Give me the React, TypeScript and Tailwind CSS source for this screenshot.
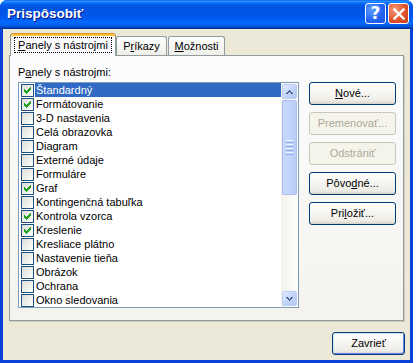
import React from "react";

const items: [string, boolean][] = [
  ["Štandardný", true],
  ["Formátovanie", true],
  ["3-D nastavenia", false],
  ["Celá obrazovka", false],
  ["Diagram", false],
  ["Externé údaje", false],
  ["Formuláre", false],
  ["Graf", true],
  ["Kontingenčná tabuľka", false],
  ["Kontrola vzorca", true],
  ["Kreslenie", true],
  ["Kresliace plátno", false],
  ["Nastavenie tieňa", false],
  ["Obrázok", false],
  ["Ochrana", false],
  ["Okno sledovania", false],
];

const CHECK = ["......#", ".....##", "#...###", "##.###.", "#####..", ".###...", "..#...."];
const UP = ["...#...", "..###..", ".##.##.", "##...##"];
const DOWN = ["##...##", ".##.##.", "..###..", "...#..."];

function Pixels({ rows, color }: { rows: string[]; color: string }) {
  const rects: React.ReactNode[] = [];
  rows.forEach((r, y) =>
    r.split("").forEach((c, x) => {
      if (c === "#") rects.push(<rect key={`${x}-${y}`} x={x} y={y} width={1} height={1} fill={color} />);
    })
  );
  return (
    <svg width={rows[0].length} height={rows.length} shapeRendering="crispEdges">
      {rects}
    </svg>
  );
}

function Check({ checked }: { checked: boolean }) {
  return (
    <div className="w-[13px] h-[13px] shrink-0 border border-[#1c5180] bg-[linear-gradient(135deg,#dcdcd7,#ffffff)] flex items-center justify-center">
      {checked && <Pixels rows={CHECK} color="#21a121" />}
    </div>
  );
}

function Btn({ children, disabled, className = "" }: { children: React.ReactNode; disabled?: boolean; className?: string }) {
  return (
    <div
      className={
        "h-[23px] rounded-[3px] border flex items-center justify-center " +
        (disabled
          ? "border-[#c9c7ba] bg-[#f5f4ea] text-[#aca899] "
          : "border-[#003c74] bg-[linear-gradient(180deg,#ffffff,#f3f2ee_60%,#ecebe6_86%,#d6d0c5)] text-black ") +
        className
      }
    >
      {children}
    </div>
  );
}

function ScrollBtn({ rows }: { rows: string[] }) {
  return (
    <div className="h-[17px] w-[17px] p-[1px] shrink-0">
      <div className="h-full w-full rounded-[2px] border border-[#bccdf4] bg-[linear-gradient(135deg,#e3ebfe,#c4d4fb_50%,#b4c8f6)] flex items-center justify-center">
        <Pixels rows={rows} color="#4d6185" />
      </div>
    </div>
  );
}

export default function App() {
  return (
    <div className="w-[416px] h-[363px] bg-white font-['Liberation_Sans',Arial,sans-serif] text-[11px] leading-[13px] text-black">
      <div className="w-[413px] h-[363px] rounded-t-[7px] overflow-hidden flex flex-col bg-[#0842d8]">
        {/* Title bar */}
        <div className="h-[29px] shrink-0 flex items-start pl-[7px] pr-[4px] bg-[linear-gradient(180deg,#0058ee_0%,#3593ff_4%,#288eff_6%,#127dff_8%,#036ffc_10%,#0262ee_14%,#0057e5_20%,#0054e3_24%,#0055eb_56%,#005bf5_66%,#026afe_76%,#0062ef_86%,#0052d6_92%,#0040ab_96%,#003092_100%)]">
          <span className="flex-1 mt-[6px] text-white font-bold text-[13.5px] leading-[16px] [text-shadow:1px_1px_0_#0a1883]">
            Prispôsobiť
          </span>
          <div className="flex gap-[2px] mt-[3px]">
            <div className="w-[21px] h-[21px] rounded-[3px] border border-white bg-[radial-gradient(circle_at_30%_30%,#5a9bff,#2263f0_60%,#1b55d8)] flex items-center justify-center">
              <span className="text-white font-bold text-[17px] leading-[17px] font-['DejaVu_Sans',sans-serif]">?</span>
            </div>
            <div className="w-[21px] h-[21px] rounded-[3px] border border-white bg-[radial-gradient(circle_at_30%_30%,#f39a7c,#e0532a_55%,#c8401a)] flex items-center justify-center">
              <svg width="12" height="12" viewBox="0 0 12 12">
                <path d="M1.5 1.5 L10.5 10.5 M10.5 1.5 L1.5 10.5" stroke="white" strokeWidth="2.4" strokeLinecap="square" />
              </svg>
            </div>
          </div>
        </div>

        {/* Body */}
        <div className="flex-1 mx-[3px] mb-[3px] bg-[#ece9d8] flex flex-col pt-[4px]">
          <div className="ml-[6px] w-[395px] flex flex-col">
            {/* Tabs */}
            <div className="h-[22px] flex items-end pl-[1px]">
              <div className="relative z-10 -mb-px h-[23px] w-[106px] rounded-t-[3px] border-x border-t border-[#919b9c] border-t-[#e68b2c] shadow-[inset_0_2px_0_#ffc73c] bg-[#fcfcfe] flex items-start justify-center pt-[3px]">
                <span className="border border-dotted border-black px-[3px] h-[16px] leading-[14px]">
                  <span className="underline">P</span>anely s nástrojmi
                </span>
              </div>
              <div className="h-[19px] w-[51px] rounded-t-[3px] border-x border-t border-[#919b9c] bg-[linear-gradient(180deg,#ffffff,#fafaf9_26%,#f0f0ea_95%,#ecebe6)] flex items-center justify-center">
                <span>
                  P<span className="underline">r</span>íkazy
                </span>
              </div>
              <div className="ml-[1px] h-[19px] w-[57px] rounded-t-[3px] border-x border-t border-[#919b9c] bg-[linear-gradient(180deg,#ffffff,#fafaf9_26%,#f0f0ea_95%,#ecebe6)] flex items-center justify-center">
                <span>
                  <span className="underline">M</span>ožnosti
                </span>
              </div>
            </div>

            {/* Panel */}
            <div className="h-[266px] border border-[#919b9c] shadow-[1px_1px_0_#d0cdbf] bg-[linear-gradient(180deg,#fcfcfe,#f4f3ee)] pl-[8px] pt-[9px]">
              <div className="h-[14px] leading-[14px] mb-[3px]">
                P<span className="underline">a</span>nely s nástrojmi:
              </div>
              <div className="flex items-start">
                {/* List box */}
                <div className="w-[281px] h-[226px] border border-[#7f9db9] bg-white flex">
                  <div className="flex-1 flex flex-col pl-[2px]">
                    {items.map(([label, checked], i) => (
                      <div key={label} className="h-[14px] flex items-center shrink-0">
                        <Check checked={checked} />
                        <div
                          className={
                            "ml-[1px] flex-1 h-[14px] pl-[1px] leading-[14px] whitespace-nowrap " +
                            (i === 0 ? "bg-[#316ac5] text-white" : "")
                          }
                        >
                          {label}
                        </div>
                      </div>
                    ))}
                  </div>
                  {/* Scrollbar */}
                  <div className="w-[17px] flex flex-col bg-[linear-gradient(90deg,#f3f1ec,#fefefb)]">
                    <ScrollBtn rows={UP} />
                    <div className="h-[95px] mx-[1px] rounded-[2px] border border-[#a9bdef] bg-[linear-gradient(90deg,#c9d7fc,#c2d3fc_50%,#b9cbf8)] flex flex-col items-center justify-center gap-[1px] shrink-0">
                      <div className="w-[7px] h-px bg-[#eef3fe]" />
                      <div className="w-[7px] h-px bg-[#8faaeb]" />
                      <div className="w-[7px] h-px bg-[#eef3fe]" />
                      <div className="w-[7px] h-px bg-[#8faaeb]" />
                      <div className="w-[7px] h-px bg-[#eef3fe]" />
                      <div className="w-[7px] h-px bg-[#8faaeb]" />
                      <div className="w-[7px] h-px bg-[#eef3fe]" />
                      <div className="w-[7px] h-px bg-[#8faaeb]" />
                    </div>
                    <div className="flex-1" />
                    <ScrollBtn rows={DOWN} />
                  </div>
                </div>

                {/* Buttons */}
                <div className="ml-[10px] w-[87px] flex flex-col gap-[7px]">
                  <Btn>
                    <span>
                      <span className="underline">N</span>ové...
                    </span>
                  </Btn>
                  <Btn disabled>Premenovať...</Btn>
                  <Btn disabled>Odstrániť</Btn>
                  <Btn>
                    <span>
                      Pôvo<span className="underline">d</span>né...
                    </span>
                  </Btn>
                  <Btn>
                    <span>
                      Pri<span className="underline">l</span>ožiť...
                    </span>
                  </Btn>
                </div>
              </div>
            </div>
          </div>

          <div className="flex justify-end mt-[11px] pr-[5px]">
            <Btn className="w-[73px] shadow-[inset_1px_1px_0_#cee7ff,inset_-1px_-1px_0_#6982ee]">Zavrieť</Btn>
          </div>
        </div>
      </div>
    </div>
  );
}
